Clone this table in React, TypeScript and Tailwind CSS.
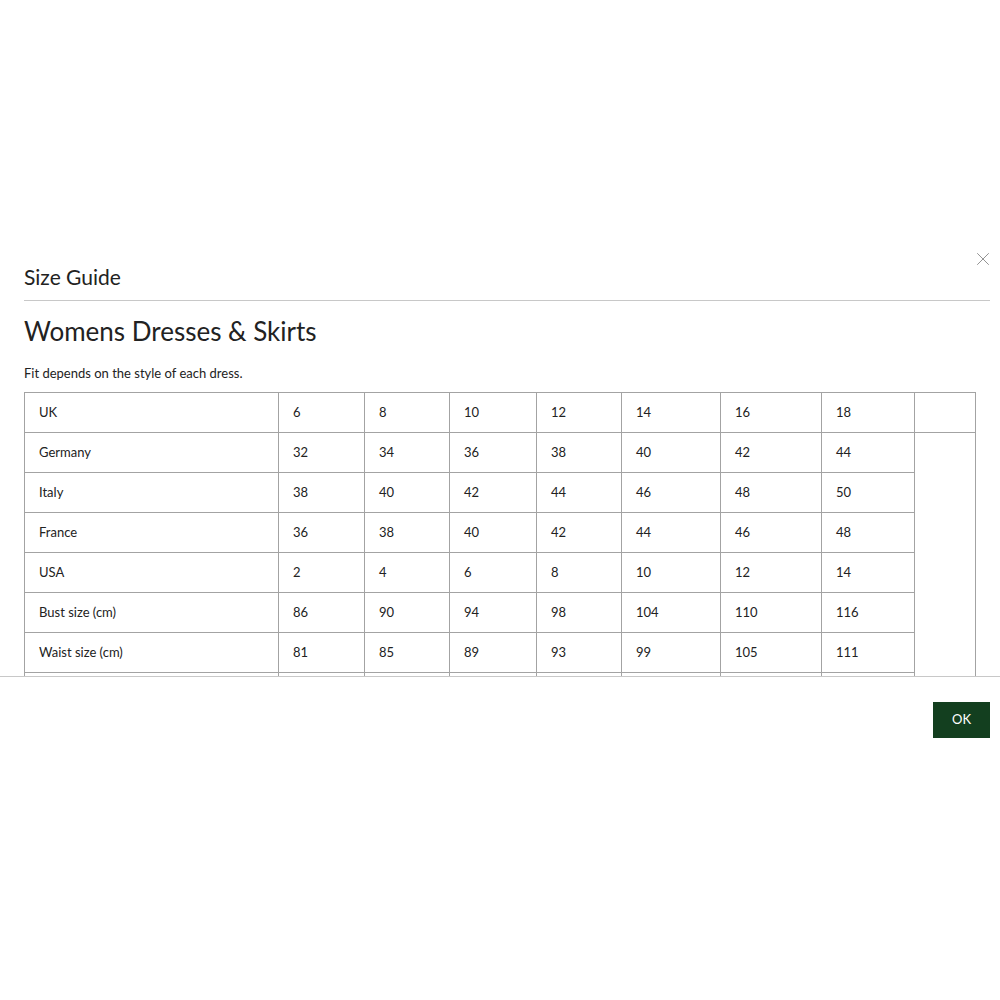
import { X } from 'lucide-react'

const rows: [string, string[]][] = [
  ['Germany', ['32', '34', '36', '38', '40', '42', '44']],
  ['Italy', ['38', '40', '42', '44', '46', '48', '50']],
  ['France', ['36', '38', '40', '42', '44', '46', '48']],
  ['USA', ['2', '4', '6', '8', '10', '12', '14']],
  ['Bust size (cm)', ['86', '90', '94', '98', '104', '110', '116']],
  ['Waist size (cm)', ['81', '85', '89', '93', '99', '105', '111']],
]

const sizes = ['6', '8', '10', '12', '14', '16', '18']

export default function App() {
  return (
    <div className="min-h-screen w-full bg-white text-[#222] pt-[252px]" style={{ fontFamily: 'Lato, "Open Sans", sans-serif' }}>
      <div className="relative">
        <button className="absolute right-[6px] top-[-4px] text-[#8a8a8a]">
          <X size={22} strokeWidth={1} />
        </button>

        <div className="ml-6 mr-[10px] border-b border-[#c8c8c8] pt-[10px] pb-[9px]">
          <h2 className="text-[21px] leading-[29px]">Size Guide</h2>
        </div>

        <div className="h-[375px] overflow-hidden pl-6 pr-[25px]">
          <h1 className="mt-[12px] text-[26px] leading-[36px]">Womens Dresses &amp; Skirts</h1>
          <p className="mt-[15px] text-[13px] leading-[18px]">Fit depends on the style of each dress.</p>

          <table className="mt-[10px] w-[951px] table-fixed border-collapse border border-[#a3a3a3] text-[13px]">
            <colgroup>
              <col className="w-[254px]" />
              <col className="w-[86px]" />
              <col className="w-[85px]" />
              <col className="w-[87px]" />
              <col className="w-[85px]" />
              <col className="w-[99px]" />
              <col className="w-[101px]" />
              <col className="w-[93px]" />
              <col className="w-[61px]" />
            </colgroup>
            <tbody>
              <tr className="h-[40px]">
                <td className="border border-[#a3a3a3] pl-[14px]">UK</td>
                {sizes.map((s) => (
                  <td key={s} className="border border-[#a3a3a3] pl-[14px]">{s}</td>
                ))}
                <td className="border border-[#a3a3a3]"></td>
              </tr>
              {rows.map(([label, vals]) => (
                <tr key={label} className="h-[40px]">
                  <td className="border border-[#a3a3a3] pl-[14px]">{label}</td>
                  {vals.map((v, i) => (
                    <td key={i} className="border border-[#a3a3a3] pl-[14px]">{v}</td>
                  ))}
                </tr>
              ))}
              <tr className="h-[40px]">
                {sizes.concat(['']).map((_, i) => (
                  <td key={i} className="border border-[#a3a3a3]"></td>
                ))}
              </tr>
            </tbody>
          </table>
        </div>

        <div className="flex justify-end border-t border-[#c8c8c8] pt-[25px] pr-[10px]">
          <button className="h-[36px] w-[57px] bg-[#133f1f] text-[13px] text-white">OK</button>
        </div>
      </div>
    </div>
  )
}
